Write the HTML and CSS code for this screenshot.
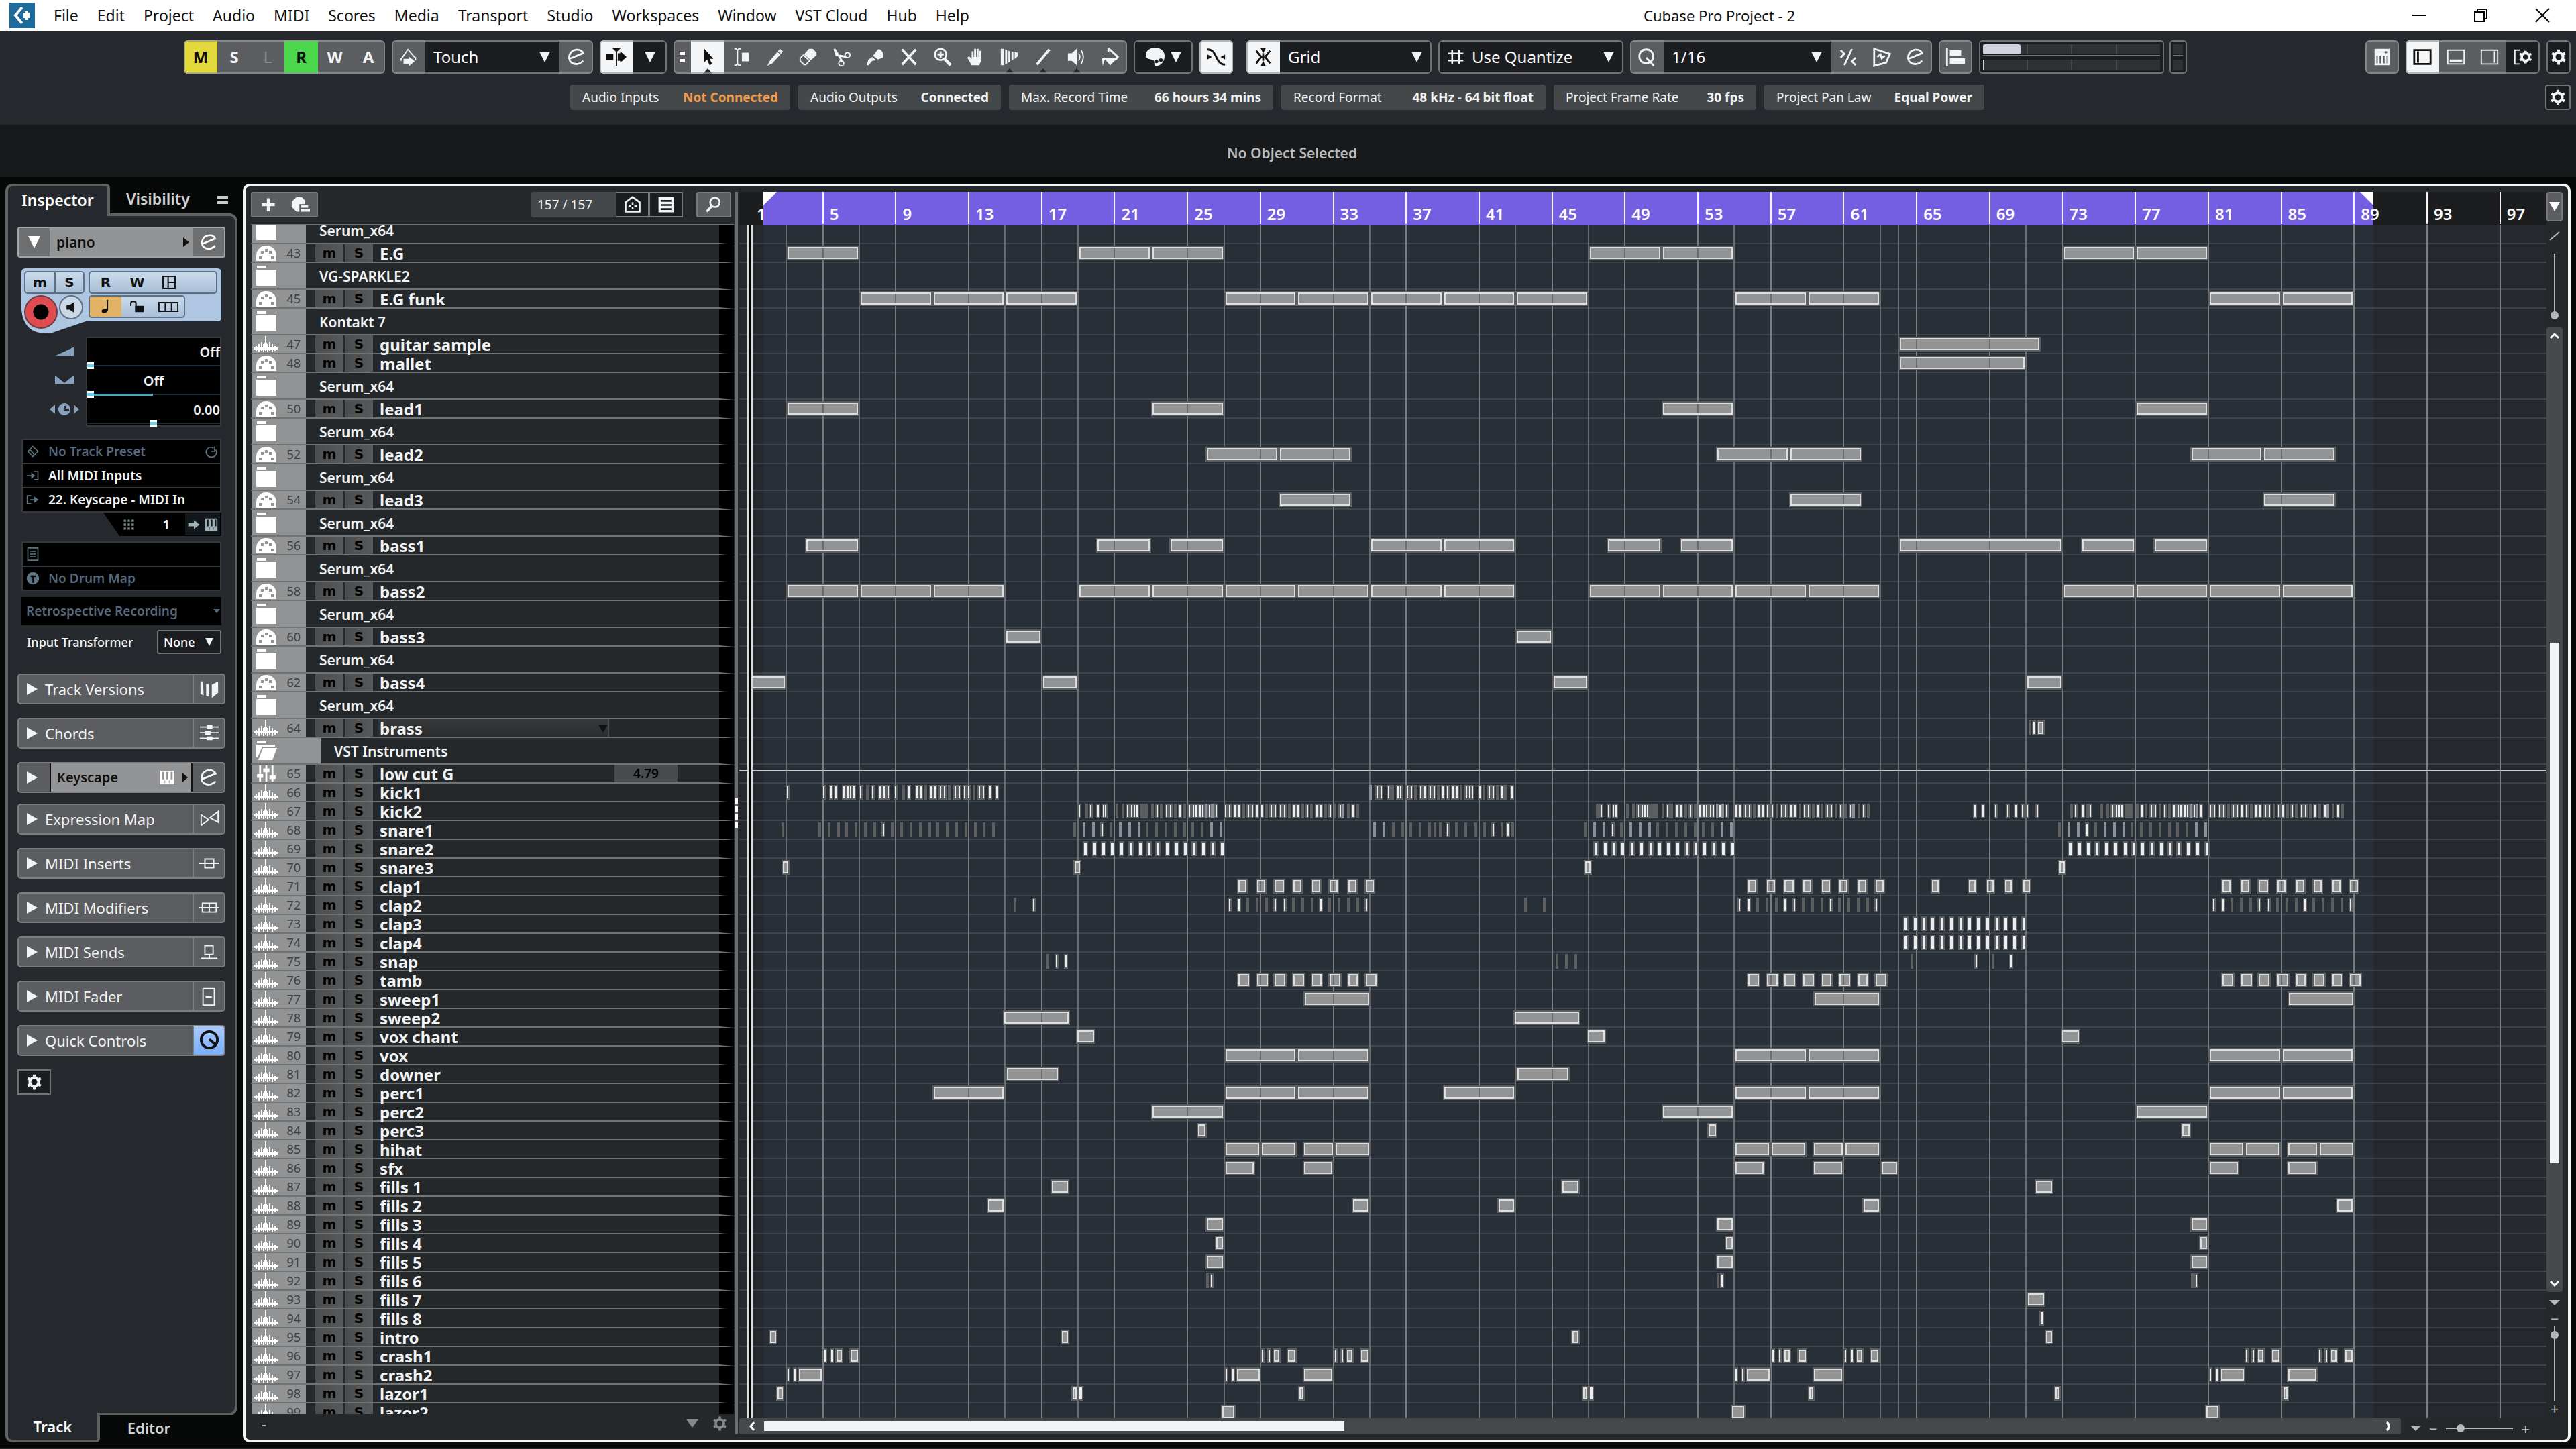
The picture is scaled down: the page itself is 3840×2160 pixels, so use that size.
FILE: index.html
```html
<!DOCTYPE html>
<html lang="en">
<head>
<meta charset="utf-8">
<title>Cubase Pro Project - 2</title>
<link rel="stylesheet" href="styles.css">
</head>
<body>
<svg class="defs" aria-hidden="true">
  <symbol id="i-arrow" viewBox="0 0 32 32"><path d="M10 2v23l5-5 4 9 4-2-4-8h6z"/></symbol>
  <symbol id="i-range" viewBox="0 0 32 32"><path d="M5 3h3l2 2 2-2h3M10 4v24M5 29h3l2-2 2 2h3" fill="none" stroke="currentColor" stroke-width="2"/><path d="M17 9h11v14H17z"/></symbol>
  <symbol id="i-pencil" viewBox="0 0 32 32"><path d="M24 3l5 4-3 4-5-4zM20 8l5 4-13 14-8 4 4-8z"/></symbol>
  <symbol id="i-eraser" viewBox="0 0 32 32"><path d="M17 3h6l6 6v4l-9 8-11-9z"/><path d="M8 13l10 9-6 6H9l-6-6v-4z" fill="none" stroke="currentColor" stroke-width="2"/></symbol>
  <symbol id="i-cut" viewBox="0 0 32 32"><path d="M4 3l9 14 4 7M4 3l3 10 16 3" fill="none" stroke="currentColor" stroke-width="3"/><circle cx="25" cy="13" r="4" fill="none" stroke="currentColor" stroke-width="2"/><circle cx="15" cy="26" r="4" fill="none" stroke="currentColor" stroke-width="2"/></symbol>
  <symbol id="i-glue" viewBox="0 0 32 32"><path d="M20 4c5-2 10 6 8 13l-8 3-8-6zM11 16l6 5-6 1-6 7H2l3-9z"/></symbol>
  <symbol id="i-x" viewBox="0 0 32 32"><path d="M5 4l22 24M27 4L5 28" fill="none" stroke="currentColor" stroke-width="4"/></symbol>
  <symbol id="i-zoom" viewBox="0 0 32 32"><circle cx="13" cy="12" r="9" fill="none" stroke="currentColor" stroke-width="3"/><path d="M19 19l10 10" stroke="currentColor" stroke-width="5"/><path d="M8 12h10M13 7v10" stroke="currentColor" stroke-width="3"/></symbol>
  <symbol id="i-hand" viewBox="0 0 32 32"><path d="M9 29l-7-12 3-2 4 4V7h3v9h1V3h3v13h1V3h3v13h1V6h3v16l-3 7z"/></symbol>
  <symbol id="i-comp" viewBox="0 0 32 32"><path d="M2 3h5v26H2zM9 4l3 1v21l-3 2zM14 6l3 1v16l-3 2zM19 7l3 1v12l-3 2zM24 8l5 1v6l-5 4z"/></symbol>
  <symbol id="i-line" viewBox="0 0 32 32"><path d="M6 28L26 4" stroke="currentColor" stroke-width="4"/></symbol>
  <symbol id="i-speaker" viewBox="0 0 32 32"><path d="M2 10h6l8-7v26l-8-7H2z"/><path d="M19 10q4 6 0 12M23 5q7 11 0 22" fill="none" stroke="currentColor" stroke-width="2"/></symbol>
  <symbol id="i-bucket" viewBox="0 0 32 32"><path d="M5 17h23L16 29zM3 18h5l-4 12z"/><path d="M13 2l15 14-4 5M13 2v6" fill="none" stroke="currentColor" stroke-width="3"/></symbol>
  <symbol id="i-palette" viewBox="0 0 32 32"><path fill-rule="evenodd" d="M16 1c9 0 15 6 15 13 0 9-6 16-13 16-6 0-1-7-5-9S1 20 1 13C1 6 8 1 16 1zm9 17a3 3 0 1 0 .1 0zm-7 2a3 3 0 1 0 .1 0z"/></symbol>
  <symbol id="i-auto" viewBox="0 0 32 32"><path d="M4 20L15 4l12 14M4 18v4M27 16v5" fill="none" stroke="currentColor" stroke-width="2"/><path d="M8 19h8v-4l10 8-10 8v-4H8z"/></symbol>
  <symbol id="i-e" viewBox="0 0 32 32"><path d="M5 19l22-9C23 1 8 3 5 14c-3 12 12 18 22 8" fill="none" stroke="currentColor" stroke-width="3"/></symbol>
  <symbol id="i-scroll" viewBox="0 0 32 32"><path d="M0 11h11v10H0zM18 10h4V7l10 9-10 9v-3h-4z"/><path d="M16 2v28M11 2h10l-5 5z" stroke="currentColor" stroke-width="2"/></symbol>
  <symbol id="i-zero" viewBox="0 0 32 32"><path d="M2 4c9 0 11 6 14 12s6 12 14 12" fill="none" stroke="currentColor" stroke-width="3"/><path d="M2 12v8l7-4zM30 12v8l-7-4z"/></symbol>
  <symbol id="i-snap" viewBox="0 0 32 32"><path d="M12 2h8l-4 8zM12 30h8l-4-8z"/><path d="M16 10v12M5 6l8 10-8 10M27 6l-8 10 8 10" fill="none" stroke="currentColor" stroke-width="3"/></symbol>
  <symbol id="i-hash" viewBox="0 0 32 32"><path d="M10 4v24M22 4v24M3 10h26M3 22h26" stroke="currentColor" stroke-width="3"/></symbol>
  <symbol id="i-q" viewBox="0 0 32 32"><path d="M15 4c7 0 11 5 11 11s-4 11-11 11S4 21 4 15 8 4 15 4zM15 17l12 13" fill="none" stroke="currentColor" stroke-width="3"/></symbol>
  <symbol id="i-soft" viewBox="0 0 32 32"><path d="M22 3L10 29M4 5l6 6-6 6M28 17l-6 6 6 6" fill="none" stroke="currentColor" stroke-width="3"/></symbol>
  <symbol id="i-iq" viewBox="0 0 32 32"><path d="M4 3l25 8-6 14L4 30zM9 16l5-4 2 6 5-4" fill="none" stroke="currentColor" stroke-width="3"/></symbol>
  <symbol id="i-align" viewBox="0 0 32 32"><path d="M1 1h3v30H1zM7 5h18v9H7zM7 18h24v9H7z"/></symbol>
  <symbol id="i-keys" viewBox="0 0 32 32"><path fill-rule="evenodd" d="M4 3h24v26H4zM7 14v12h2V14zM12 14v12h2V14zM18 14v12h2V14zM23 14v12h2V14zM20 7v3h5V7z"/></symbol>
  <symbol id="i-zleft" viewBox="0 0 32 32"><path d="M3 5h26v22H3zM9 7v18" fill="none" stroke="currentColor" stroke-width="3"/></symbol>
  <symbol id="i-zlow" viewBox="0 0 32 32"><path d="M3 5h26v22H3z" fill="none" stroke="currentColor" stroke-width="2"/><path d="M6 20h20v4H6z"/></symbol>
  <symbol id="i-zright" viewBox="0 0 32 32"><path d="M3 5h26v22H3zM24 7v18" fill="none" stroke="currentColor" stroke-width="2"/></symbol>
  <symbol id="i-zset" viewBox="0 0 32 32"><path d="M11 5H3v22h8" fill="none" stroke="currentColor" stroke-width="2"/><circle cx="20" cy="16" r="6" fill="none" stroke="currentColor" stroke-width="4"/><path d="M20 6v4M20 22v4M11 11l4 2M29 11l-4 2M11 21l4-2M29 21l-4-2" stroke="currentColor" stroke-width="4"/></symbol>
  <symbol id="i-gear" viewBox="0 0 32 32"><circle cx="16" cy="16" r="8" fill="none" stroke="currentColor" stroke-width="5"/><path d="M16 2v6M16 24v6M4 9l5 3M28 9l-5 3M4 23l5-3M28 23l-5-3" stroke="currentColor" stroke-width="5"/></symbol>
  <symbol id="i-plus" viewBox="0 0 32 32"><path d="M16 5v22M5 16h22" stroke="currentColor" stroke-width="5"/></symbol>
  <symbol id="i-preset" viewBox="0 0 32 32"><path d="M9 3h9l6 6v6H14v13H9l-8-8V11z"/><path d="M17 17h12v4H17zM17 24h15v4H17z"/></symbol>
  <symbol id="i-house" viewBox="0 0 32 32"><path d="M4 12L16 3l12 9v16H4z" fill="none" stroke="currentColor" stroke-width="3"/><path d="M16 12v4M16 20v4M9 18h4M19 18h4" stroke="currentColor" stroke-width="3"/></symbol>
  <symbol id="i-list" viewBox="0 0 32 32"><path fill-rule="evenodd" d="M3 3h26v26H3zM7 8v3h18V8zM7 15v3h18v-3zM7 22v3h18v-3z"/></symbol>
  <symbol id="i-search" viewBox="0 0 32 32"><circle cx="18" cy="12" r="8" fill="none" stroke="currentColor" stroke-width="3"/><path d="M13 18L4 28" stroke="currentColor" stroke-width="4"/></symbol>
  <symbol id="i-midi" viewBox="0 0 32 24"><path fill-rule="evenodd" d="M1 24V16C1 7 8 1 16 1s15 6 15 15v8zM5 17h4v4H5zM8 9h4v4H8zM14 6h4v4h-4zM20 9h4v4h-4zM23 17h4v4h-4z"/></symbol>
  <symbol id="i-folder" viewBox="0 0 32 32"><path d="M2 1h13v4H2zM1 7h30v24H1z"/></symbol>
  <symbol id="i-open" viewBox="0 0 32 32"><path d="M2 1h13v4H2zM1 7h28v3H10L3 26H1z"/><path d="M11 12h21l-7 18H4z"/></symbol>
  <symbol id="i-audio" viewBox="0 0 36 24"><path d="M0 17h36v3H0zM16 10h4v10h-4z"/><path d="M4 15v7M8 12v12M12 9v13M15 12v12M18 0v22M21 12v12M24 9v13M28 12v12M32 15v7" stroke="currentColor" stroke-width="2"/></symbol>
  <symbol id="i-fader" viewBox="0 0 32 26"><path d="M6 0v26M16 0v26M26 0v26" stroke="currentColor" stroke-width="3"/><path d="M1 14h10v6H1zM11 5h10v6H11zM21 16h10v6H21z"/></symbol>
  <symbol id="i-lanes" viewBox="0 0 32 32"><path d="M3 3h26v26H3zM14 3v26M14 16h15" fill="none" stroke="currentColor" stroke-width="3"/></symbol>
  <symbol id="i-note" viewBox="0 0 32 32"><path d="M19 1h3v22c0 8-14 9-14 3 0-4 6-6 11-5z"/></symbol>
  <symbol id="i-lock" viewBox="0 0 32 32"><path d="M12 14h19v14H12z"/><path d="M3 14V9c0-6 11-6 11 0v6" fill="none" stroke="currentColor" stroke-width="3"/></symbol>
  <symbol id="i-cells" viewBox="0 0 32 16"><path d="M1 1h30v14H1zM11 2v12M21 2v12" fill="none" stroke="currentColor" stroke-width="2"/></symbol>
  <symbol id="i-piano" viewBox="0 0 24 24"><path fill-rule="evenodd" d="M1 1h22v22H1zM4 3v12h3V3zM11 3v12h3V3zM18 3v12h3V3zM8 17v4h1v-4zM15 17v4h1v-4z"/></symbol>
  <symbol id="i-vol" viewBox="0 0 32 16"><path d="M1 15L31 1v14z"/></symbol>
  <symbol id="i-pan" viewBox="0 0 32 16"><path d="M1 1l15 12L31 1v14H1z"/></symbol>
  <symbol id="i-clock" viewBox="0 0 44 20"><path d="M8 3v14L0 10zM36 3v14l8-7z"/><path fill-rule="evenodd" d="M22 1a9 9 0 1 1-.1 0zm-1 4v7h8v-3h-5V5z"/></symbol>
  <symbol id="i-diamond" viewBox="0 0 24 24"><path d="M12 3l9 9-9 9-9-9zM6 8l8 9" fill="none" stroke="currentColor" stroke-width="2"/></symbol>
  <symbol id="i-in" viewBox="0 0 24 24"><path d="M1 12h12M14 5h7v14h-7" fill="none" stroke="currentColor" stroke-width="2"/><path d="M9 6v12l7-6z"/></symbol>
  <symbol id="i-out" viewBox="0 0 24 24"><path d="M9 5H2v14h7M7 12h10" fill="none" stroke="currentColor" stroke-width="2"/><path d="M14 6v12l8-6z"/></symbol>
  <symbol id="i-reload" viewBox="0 0 24 24"><path d="M20 9c4 8-2 13-8 13S0 15 4 9s8-5 12-3M12 12h6V3" fill="none" stroke="currentColor" stroke-width="2"/></symbol>
  <symbol id="i-dots" viewBox="0 0 24 24"><path d="M3 3h4v4H3zM10 3h4v4h-4zM17 3h4v4h-4zM3 10h4v4H3zM10 10h4v4h-4zM17 10h4v4h-4zM3 17h4v4H3zM10 17h4v4h-4zM17 17h4v4h-4z"/></symbol>
  <symbol id="i-sheet" viewBox="0 0 24 24"><path d="M3 1h18v22H3zM7 7h10M7 12h10M7 17h10" fill="none" stroke="currentColor" stroke-width="2"/></symbol>
  <symbol id="i-drum" viewBox="0 0 24 24"><path fill-rule="evenodd" d="M12 1a11 11 0 1 1-.1 0zM8 7v3h3v10h3V10h3V7z"/></symbol>
  <symbol id="i-right" viewBox="0 0 24 24"><path d="M2 9h10V4l10 8-10 8v-5H2z"/></symbol>
  <symbol id="i-versions" viewBox="0 0 32 32"><path d="M2 4h4l1 22-5-2zM11 8h4v20l-4-1zM20 9l10-5v18l-10 8z"/></symbol>
  <symbol id="i-chords" viewBox="0 0 32 32"><path d="M1 6h30M1 15h30M1 24h30" stroke="currentColor" stroke-width="2"/><path d="M12 3h9v6h-9zM9 12h9v6H9zM12 21h9v6h-9z"/></symbol>
  <symbol id="i-expr" viewBox="0 0 32 32"><path d="M3 9v17l12-9zM30 4v17L17 14z" fill="none" stroke="currentColor" stroke-width="2"/></symbol>
  <symbol id="i-insert" viewBox="0 0 32 32"><path d="M0 16h32M9 9h14v14H9z" fill="none" stroke="currentColor" stroke-width="2"/></symbol>
  <symbol id="i-modif" viewBox="0 0 32 32"><path d="M0 16h32M5 9h22v14H5zM16 9v14" fill="none" stroke="currentColor" stroke-width="2"/></symbol>
  <symbol id="i-send" viewBox="0 0 32 32"><path d="M3 26h26M16 26v-6M9 6h13v14H9z" fill="none" stroke="currentColor" stroke-width="2"/></symbol>
  <symbol id="i-mfader" viewBox="0 0 32 32"><path d="M6 4h18v26H6zM10 17h10" fill="none" stroke="currentColor" stroke-width="2"/></symbol>
  <symbol id="i-knob" viewBox="0 0 32 32"><circle cx="16" cy="15" r="13" fill="none" stroke="currentColor" stroke-width="4"/><path d="M16 14l9 8" stroke="currentColor" stroke-width="4"/></symbol>
</svg>

<header class="menubar">
  <svg class="logo" viewBox="0 0 38 38"><path fill="#1e6a9a" d="M0 0h38v38H0z"/><path d="M19 7L9 19l10 12" fill="none" stroke="#fff" stroke-width="4"/><path fill="#fff" d="M21 15h3v-3h4v3h2v8h-2v3h-4v-3h-3z"/></svg>
  <nav class="menus">
    <a href="#">File</a><a href="#">Edit</a><a href="#">Project</a><a href="#">Audio</a><a href="#">MIDI</a><a href="#">Scores</a><a href="#">Media</a><a href="#">Transport</a><a href="#">Studio</a><a href="#">Workspaces</a><a href="#">Window</a><a href="#">VST Cloud</a><a href="#">Hub</a><a href="#">Help</a>
  </nav>
  <h1 class="title">Cubase Pro Project - 2</h1>
  <div class="winbtns">
    <button aria-label="Minimize"><svg viewBox="0 0 24 24"><path d="M2 12h20" stroke="#000" stroke-width="2"/></svg></button>
    <button aria-label="Restore"><svg viewBox="0 0 24 24"><path d="M3 7h14v14H3zM7 7V3h14v14h-4" fill="none" stroke="#000" stroke-width="2"/></svg></button>
    <button aria-label="Close"><svg viewBox="0 0 24 24"><path d="M2 2l20 20M22 2L2 22" stroke="#000" stroke-width="2"/></svg></button>
  </div>
</header>

<section class="toolbar">
  <div class="tools">
    <div class="group letters">
      <button class="yellow">M</button><button>S</button><button class="off">L</button><button class="green">R</button><button>W</button><button>A</button>
    </div>
    <div class="group">
      <button aria-label="Automation"><svg><use href="#i-auto"/></svg></button>
      <label class="pick grow-200"><select aria-label="Automation mode"><option>Touch</option></select></label>
      <button aria-label="Open automation panel"><svg><use href="#i-e"/></svg></button>
    </div>
    <div class="group">
      <button class="on" aria-label="Auto-scroll"><svg><use href="#i-scroll"/></svg></button>
      <button class="dark" aria-label="Auto-scroll options"><i class="tri"></i></button>
    </div>
    <div class="group">
      <span class="grip"></span>
      <button class="on more" aria-label="Select"><svg><use href="#i-arrow"/></svg></button>
      <button aria-label="Range"><svg><use href="#i-range"/></svg></button>
      <button aria-label="Draw"><svg><use href="#i-pencil"/></svg></button>
      <button aria-label="Erase"><svg><use href="#i-eraser"/></svg></button>
      <button aria-label="Split"><svg><use href="#i-cut"/></svg></button>
      <button aria-label="Glue"><svg><use href="#i-glue"/></svg></button>
      <button aria-label="Mute"><svg><use href="#i-x"/></svg></button>
      <button aria-label="Zoom"><svg><use href="#i-zoom"/></svg></button>
      <button aria-label="Hand"><svg><use href="#i-hand"/></svg></button>
      <button class="more" aria-label="Comp"><svg><use href="#i-comp"/></svg></button>
      <button class="more" aria-label="Line"><svg><use href="#i-line"/></svg></button>
      <button class="more" aria-label="Play"><svg><use href="#i-speaker"/></svg></button>
      <button aria-label="Color"><svg><use href="#i-bucket"/></svg></button>
    </div>
    <div class="group"><button class="dark wide" aria-label="Color menu"><svg><use href="#i-palette"/></svg><i class="tri"></i></button></div>
    <div class="group spaced"><button class="on" aria-label="Snap to zero crossing"><svg><use href="#i-zero"/></svg></button></div>
    <div class="group">
      <button class="on" aria-label="Snap"><svg><use href="#i-snap"/></svg></button>
      <label class="pick grow-226"><select aria-label="Snap type"><option>Grid</option></select></label>
    </div>
    <div class="group"><label class="pick grow-276"><svg><use href="#i-hash"/></svg><select aria-label="Grid type"><option>Use Quantize</option></select></label></div>
    <div class="group">
      <button aria-label="Apply quantize"><svg><use href="#i-q"/></svg></button>
      <label class="pick grow-250"><select aria-label="Quantize preset"><option>1/16</option></select></label>
      <button aria-label="Soft quantize"><svg><use href="#i-soft"/></svg></button>
      <button aria-label="Iterative quantize"><svg><use href="#i-iq"/></svg></button>
      <button aria-label="Open quantize panel"><svg><use href="#i-e"/></svg></button>
    </div>
    <div class="group"><button aria-label="Align"><svg><use href="#i-align"/></svg></button></div>
    <div class="meters">
      <div class="meter"><span class="level"></span><i></i><i></i><i></i></div>
      <div class="meter"><span class="peak"></span><i></i><i></i><i></i></div>
    </div>
    <div class="meters tiny"><div class="meter"></div><div class="meter"></div></div>
    <div class="push group"><button aria-label="Keyboard"><svg><use href="#i-keys"/></svg></button></div>
    <div class="group">
      <button class="on" aria-label="Left zone"><svg><use href="#i-zleft"/></svg></button>
      <button aria-label="Lower zone"><svg><use href="#i-zlow"/></svg></button>
      <button aria-label="Right zone"><svg><use href="#i-zright"/></svg></button>
      <button class="dark" aria-label="Window layout"><svg><use href="#i-zset"/></svg></button>
    </div>
    <div class="group"><button class="dark narrow" aria-label="Set up toolbar"><svg><use href="#i-gear"/></svg></button></div>
  </div>
  <div class="status">
    <dl class="chips">
      <div class="chip w1"><dt>Audio Inputs</dt><dd class="warn">Not Connected</dd></div>
      <div class="chip w2"><dt>Audio Outputs</dt><dd>Connected</dd></div>
      <div class="chip w3"><dt>Max. Record Time</dt><dd>66 hours 34 mins</dd></div>
      <div class="chip w3"><dt>Record Format</dt><dd>48 kHz - 64 bit float</dd></div>
      <div class="chip w2"><dt>Project Frame Rate</dt><dd>30 fps</dd></div>
      <div class="chip w1"><dt>Project Pan Law</dt><dd>Equal Power</dd></div>
    </dl>
    <button class="cog" aria-label="Set up status line"><svg><use href="#i-gear"/></svg></button>
  </div>
</section>

<div class="infoline">No Object Selected</div>

<main class="workspace">
  <aside class="inspector">
    <div class="tabs top"><button class="active">Inspector</button><button>Visibility</button><span class="burger"></span></div>
    <div class="pane">
      <div class="trackname"><button aria-label="Collapse"><i class="tri"></i></button><span class="nm">piano</span><i class="play"></i><button aria-label="Edit"><svg><use href="#i-e"/></svg></button></div>

      <div class="trackctl">
        <svg class="bulge" viewBox="0 0 298 98" aria-hidden="true"><path fill="#afc6e2" d="M6 0h286q6 0 6 6v67q0 6-6 6H96L46 96Q4 102 0 62V6q0-6 6-6z"/></svg>
        <div class="ctl-left">
          <div class="pair"><button>m</button><button>S</button></div>
          <div class="rec"><button class="record" aria-label="Record enable"></button><button class="mon" aria-label="Monitor"><svg viewBox="0 0 16 16"><path d="M2 5h4l6-4v14l-6-4H2z"/></svg></button></div>
        </div>
        <div class="ctl-right">
          <div class="pair rw"><button>R</button><button>W</button><button aria-label="Lanes"><svg><use href="#i-lanes"/></svg></button></div>
          <div class="pair nl"><button class="orange" aria-label="Timebase"><svg><use href="#i-note"/></svg></button><button aria-label="Lock"><svg><use href="#i-lock"/></svg></button><button aria-label="Lane display"><svg><use href="#i-cells"/></svg></button></div>
        </div>
      </div>

      <div class="params">
        <div class="picons"><svg><use href="#i-vol"/></svg><svg><use href="#i-pan"/></svg><svg class="wide"><use href="#i-clock"/></svg></div>
        <div class="pvals">
          <label class="right">Off<input type="range" min="0" max="100" value="0"></label>
          <label class="mid">Off<input class="fill" type="range" min="0" max="100" value="0"></label>
          <label class="right">0.00<input type="range" min="0" max="100" value="50"></label>
        </div>
      </div>

      <div class="box routing">
        <div class="line dim"><svg><use href="#i-diamond"/></svg><span>No Track Preset</span><svg><use href="#i-reload"/></svg></div>
        <div class="line"><svg><use href="#i-in"/></svg><span>All MIDI Inputs</span></div>
        <div class="line"><svg><use href="#i-out"/></svg><span>22. Keyscape - MIDI In</span></div>
      </div>
      <div class="channel"><svg><use href="#i-dots"/></svg><span>1</span><button aria-label="Open instrument"><svg><use href="#i-right"/></svg><svg><use href="#i-piano"/></svg></button></div>
      <div class="box drum">
        <div class="line dim"><svg><use href="#i-sheet"/></svg></div>
        <div class="line dim"><svg><use href="#i-drum"/></svg><span>No Drum Map</span></div>
      </div>
      <button class="retro">Retrospective Recording<i class="tri"></i></button>
      <div class="transformer"><label for="xf">Input Transformer</label><span class="pick"><select id="xf"><option>None</option></select></span></div>

      <div class="sections">
        <div class="sec"><button><i class="play"></i>Track Versions</button><span><svg><use href="#i-versions"/></svg></span></div>
        <div class="sec"><button><i class="play"></i>Chords</button><span><svg><use href="#i-chords"/></svg></span></div>
        <div class="sec inst"><button aria-label="Expand"><i class="play"></i></button><b>Keyscape<svg><use href="#i-piano"/></svg><i class="play"></i></b><span><svg><use href="#i-e"/></svg></span></div>
        <div class="sec"><button><i class="play"></i>Expression Map</button><span><svg><use href="#i-expr"/></svg></span></div>
        <div class="sec"><button><i class="play"></i>MIDI Inserts</button><span><svg><use href="#i-insert"/></svg></span></div>
        <div class="sec"><button><i class="play"></i>MIDI Modifiers</button><span><svg><use href="#i-modif"/></svg></span></div>
        <div class="sec"><button><i class="play"></i>MIDI Sends</button><span><svg><use href="#i-send"/></svg></span></div>
        <div class="sec"><button><i class="play"></i>MIDI Fader</button><span><svg><use href="#i-mfader"/></svg></span></div>
        <div class="sec"><button><i class="play"></i>Quick Controls</button><span class="blue"><svg><use href="#i-knob"/></svg></span></div>
        <button class="setup" aria-label="Set up inspector"><svg><use href="#i-gear"/></svg></button>
      </div>
    </div>
    <div class="tabs bottom"><button class="active">Track</button><button>Editor</button></div>
  </aside>

  <section class="project">
    <div class="tracklist">
      <div class="tl-head">
        <div class="mini"><button aria-label="Add track"><svg><use href="#i-plus"/></svg></button><button aria-label="Use track preset"><svg><use href="#i-preset"/></svg></button></div>
        <div class="count"><span>157 / 157</span><button aria-label="Divide"><svg><use href="#i-house"/></svg></button><button aria-label="Agents"><svg><use href="#i-list"/></svg></button></div>
        <div class="mini find"><button aria-label="Find tracks"><svg><use href="#i-search"/></svg></button></div>
      </div>
      <div class="tl-view"><ol class="tracks" id="tracks"></ol></div>
      <div class="tl-foot"><span>-</span><i class="tri"></i><svg><use href="#i-gear"/></svg></div>
    </div>
    <div class="splitter"><i></i><i></i><i></i><i></i></div>
    <div class="timeline">
      <div class="ruler" id="ruler"></div>
      <div class="lanes"><div class="grid" id="grid"></div><div class="stack" id="lanes"></div><div class="rule-line"></div><div class="cursor"></div></div>
      <div class="hbar">
        <div class="hscroll"><button aria-label="Scroll left"><svg viewBox="0 0 12 16"><path d="M9 2L4 8l5 6"/></svg></button><div class="rail"><div class="thumb"></div></div><button aria-label="Scroll right"><svg viewBox="0 0 12 16"><path d="M3 2q7 6 0 12"/></svg></button></div>
        <div class="hzoom"><i class="tri"></i><b>−</b><input type="range" min="0" max="100" value="18" aria-label="Horizontal zoom"><b>+</b></div>
      </div>
    </div>
    <div class="side">
      <button class="menu" aria-label="Ruler options"><i class="tri"></i></button>
      <svg class="slash" viewBox="0 0 24 24"><path d="M5 18L19 6" stroke="#b5b7b8" stroke-width="2"/></svg>
      <input class="v wave" type="range" min="0" max="100" value="100" aria-label="Waveform zoom">
      <div class="vscroll"><button aria-label="Scroll up"><svg viewBox="0 0 16 12"><path d="M2 9l6-6 6 6"/></svg></button><div class="rail"><div class="thumb"></div></div><button aria-label="Scroll down"><svg viewBox="0 0 16 12"><path d="M2 3l6 6 6-6"/></svg></button></div>
      <i class="tri"></i><b>−</b>
      <input class="v tall" type="range" min="0" max="100" value="8" aria-label="Vertical zoom">
      <b>+</b>
    </div>
  </section>
</main>
<footer class="edge"></footer>
<script src="app.js"></script>
</body>
</html>
```
FILE: app.js
```js
// One bar is 27.174 ticks; the view starts 15 ticks before bar 1 and spans 2694.
const BAR = 2500 / 92, LEAD = 15, SPAN = 2694;
const pct = t => (t / SPAN * 100) + '%';
const pos = t => pct(t + LEAD);
const barAt = b => (b - 1) * BAR;

// '3-7 19-23' -> clips measured in bars
const bars = s => s.split(' ').map(p => {
  const [a, b] = p.split('-').map(Number);
  return [barAt(a), (b - a) * BAR];
});
// the same [offset, width] list repeated from each start bar
const at = (starts, list) => starts.flatMap(b => list.map(([o, w, k]) => [barAt(b) + o, w, k]));
// '2 t13 l9' : hit, thin slice, light slice
const hits = (s, w = 6) => s.split(' ').map(p =>
  p[0] === 't' ? [+p.slice(1) - 2, 4] :
  p[0] === 'l' ? [+p.slice(1) - 2, 4, 'light'] : [+p - w / 2, w]);

const A = [19, 47, 73], B = [27, 55, 81];
const kickB = hits('t13 19 30 38 41 t58 t67 74 80 84 88 t94 t98 t102 t111 118 t124 132 138 t145 152 t159 166 172 176 182 186 l192 196 l200 206 220 226 234 240 t247 254 260 267 274 t281 288 294 302 308 t315 322 328 t335 342 t348 356 362 t369 376 t383 391 l395 t403 410 t417');
const snareB = hits('t-5 l9 l23 36 t49 l63 l77 l91 t103 t117 t131 t145 t159 t171 t185 l199 l213');
const snare2 = hits('11 25 38 51 65 79 93 106 119 133 147 160 173 187 201 215', 8);
const clapS = hits('8 22 t35 t49 t63 76 90 t103 t117 t131 144 t157 t171 t185 t199 212');
const half = hits('11 25 38 51 65 79 93 106 119 133 147 160 173 187', 8);
const crash = [[0, 6], [10, 6], [18, 12], [39, 15]];

const tracks = [
  ['folder', '', 'Serum_x64'],
  ['midi', 43, 'E.G', bars('3-7 19-23 23-27 47-51 51-55 73-77 77-81')],
  ['folder', '', 'VG-SPARKLE2'],
  ['midi', 45, 'E.G funk', bars('7-11 11-15 15-19 27-31 31-35 35-39 39-43 43-47 55-59 59-63 81-85 85-89')],
  ['folder', '', 'Kontakt 7'],
  ['audio', 47, 'guitar sample', bars('64-71.8')],
  ['midi', 48, 'mallet', bars('64-71')],
  ['folder', '', 'Serum_x64'],
  ['midi', 50, 'lead1', bars('3-7 23-27 51-55 77-81')],
  ['folder', '', 'Serum_x64'],
  ['midi', 52, 'lead2', bars('26-30 30-34 54-58 58-62 80-84 84-88')],
  ['folder', '', 'Serum_x64'],
  ['midi', 54, 'lead3', bars('30-34 58-62 84-88')],
  ['folder', '', 'Serum_x64'],
  ['midi', 56, 'bass1', bars('4-7 20-23 24-27 35-39 39-43 48-51 52-55 64-73 74-77 78-81')],
  ['folder', '', 'Serum_x64'],
  ['midi', 58, 'bass2', bars('3-7 7-11 11-15 19-23 23-27 27-31 31-35 35-39 39-43 47-51 51-55 55-59 59-63 73-77 77-81 81-85 85-89')],
  ['folder', '', 'Serum_x64'],
  ['midi', 60, 'bass3', bars('15-17 43-45')],
  ['folder', '', 'Serum_x64'],
  ['midi', 62, 'bass4', bars('1-3 17-19 45-47 71-73')],
  ['folder', '', 'Serum_x64'],
  ['audio', 64, 'brass', at([71], [[4, 4], [9, 6], [16, 12]]), 'edit'],
  ['open', '', 'VST Instruments'],
  ['fader', 65, 'low cut G', [], 'gain'],
  ['audio', 66, 'kick1', [
    ...at([3], hits('2')),
    ...at([5], hits('1 12 19 31 37 41 46 56 t66 74 85 91 97 108 t120 128 140 146 t153 161 167 175 181 t188 197 203 211 217 t225 233 239 249 259')),
    ...at([35], hits('l1 11 17 28 t34 42 46 56 62 t68 76 82 90 96 t102 109 116 124 130 t136 144 149 153 164 t170 178 184 t190 197 t202 212'))]],
  ['audio', 67, 'kick2', [...at([19], hits('2')), ...at(A, kickB), ...at([68], hits('5 17 36 54 66 76 83 98'))]],
  ['audio', 68, 'snare1', [
    ...at([3], hits('t-5')),
    ...at([5], hits('t-5 t9 t23 t35 t49 t63 t77 90 t103 t117 t131 t145 t159 t171 t185 t199 t213 t227 t240 t254')),
    ...at(A, snareB),
    ...at([35], hits('l7 l21 t35 t49 t61 t75 t89 t97 t105 116 t129 t143 t157 t171 184 t197 206 t213'))]],
  ['audio', 69, 'snare2', at(A, snare2)],
  ['audio', 70, 'snare3', at([3, ...A], [[-7, 12]])],
  ['audio', 71, 'clap1', [
    ...at(B, [[19, 16], [47, 16], [73, 18], [101, 16], [129, 16], [155, 16], [183, 16], [209, 16]]),
    ...at([66, 68, 69, 70, 71], [[-6, 14]])]],
  ['audio', 72, 'clap2', [...at([15], hits('t15 43')), ...at([43], hits('t15 t43')), ...at(B, clapS)]],
  ['audio', 73, 'clap3', at([64], half)],
  ['audio', 74, 'clap4', at([64], half)],
  ['audio', 75, 'snap', [...at([17], hits('t9 22 36')), ...at([45], hits('t7 t21 t35')), ...at([64], hits('t20 116 t141 168'))]],
  ['audio', 76, 'tamb', at(B, [[19, 20], [47, 20], [73, 20], [101, 20], [129, 18], [155, 20], [183, 18], [209, 20]])],
  ['audio', 77, 'sweep1', at(B, [[118, 100]])],
  ['audio', 78, 'sweep2', at([15, 43], [[-3, 100]])],
  ['audio', 79, 'vox chant', at(A, [[-3, 29]])],
  ['audio', 80, 'vox', bars('27-31 31-35 55-59 59-63 81-85 85-89')],
  ['audio', 81, 'downer', at([15, 43], [[1, 80]])],
  ['audio', 82, 'perc1', bars('11-15 27-31 31-35 39-43 55-59 59-63 81-85 85-89')],
  ['audio', 83, 'perc2', bars('23-27 51-55 77-81')],
  ['audio', 84, 'perc3', at([23, 51, 77], [[68, 15]])],
  ['audio', 85, 'hihat', at(B, [[0, 54], [54, 54], [117, 47], [164, 54]])],
  ['audio', 86, 'sfx', [...at(B, [[0, 46], [117, 46]]), ...bars('63-64')]],
  ['audio', 87, 'fills 1', at([17, 45, 71], [[13, 28]])],
  ['audio', 88, 'fills 2', bars('14-15 34-35 42-43 62-63 88-89')],
  ['audio', 89, 'fills 3', bars('26-27 54-55 80-81')],
  ['audio', 90, 'fills 4', at([27, 55, 81], [[-14, 14]])],
  ['audio', 91, 'fills 5', bars('26-27 54-55 80-81')],
  ['audio', 92, 'fills 6', at([26, 54, 80], [[1, 4], [6, 6]])],
  ['audio', 93, 'fills 7', at([71], [[1, 28]])],
  ['audio', 94, 'fills 8', at([71], [[20, 7]])],
  ['audio', 95, 'intro', at([1, 17, 45, 71], [[28, 13]])],
  ['audio', 96, 'crash1', at([5, 29, 33, 57, 61, 83, 87], crash)],
  ['audio', 97, 'crash2', [
    ...at([3, 27, 55, 81], [[0, 6], [10, 6], [17, 38]]),
    ...at(B, [[117, 46]])]],
  ['audio', 98, 'lazor1', [...at([1], [[39, 12]]), ...at([19, 47], [[-10, 10], [0, 8]]), ...at(B, [[110, 10]]), ...at([73], [[-13, 10]])]],
  ['audio', 99, 'lazor2', at(B, [[-5, 22]])]
];

const el = (tag, cls, text) => {
  const n = document.createElement(tag);
  if (cls) n.className = cls;
  if (text !== undefined) n.textContent = text;
  return n;
};
const put = (parent, cls, t, w, text) => {
  const n = el('i', cls, text);
  n.style.left = pos(t);
  if (w) n.style.width = pct(w);
  parent.append(n);
  return n;
};
const icon = id => `<svg class="ico ${id}"><use href="#i-${id}"/></svg>`;

const list = document.getElementById('tracks');
const lanes = document.getElementById('lanes');
for (const [kind, num, name, clips = [], extra] of tracks) {
  const group = kind === 'folder' || kind === 'open';
  const row = el('li', 'track ' + (group ? 'group-row ' + kind : ''));
  const tag = el('span', 'tag');
  tag.innerHTML = icon(kind);
  if (!group) tag.append(el('span', 'num', num));
  row.append(tag);
  if (!group) row.append(el('button', 'ms', 'm'), el('button', 'ms', 'S'));
  row.append(el('span', 'name' + (extra === 'edit' ? ' editing' : ''), name));
  if (extra === 'gain') row.append(el('span', 'gain', '4.79'));
  list.append(row);

  const lane = el('div', 'lane' + (group ? ' tall' : ''));
  for (const [t, w, k] of clips) {
    const clip = put(lane, w <= 4 ? 'clip thin' : w <= 8 ? 'clip hit' : 'clip', t + 1, w);
    if (k) clip.classList.add(k);
    if (w > 12) {
      for (let b = 5; b < 98; b += 4) {
        const d = barAt(b) - t - 1;
        if (d > 4 && d < w - 4) {
          const m = el('b');
          m.style.left = ((d - 2) / (w - 4) * 100) + '%';
          clip.append(m);
        }
      }
    }
  }
  lanes.append(lane);
}

const ruler = document.getElementById('ruler');
const grid = document.getElementById('grid');
put(ruler, 'range', 21, 2400);
put(grid, 'range', 21, 2400);
put(ruler, 'loc left', 21);
put(ruler, 'loc right', 2421);
for (let b = 1; b < 98; b += 4) {
  if (b > 1) {
    put(ruler, 'tick', barAt(b));
    put(grid, 'tick', barAt(b));
  }
  put(ruler, 'num', barAt(b), 0, b);
}
for (const b of [3, 7, 15, 19, 27, 35, 43, 47, 55, 63, 64, 71]) put(grid, 'mark', barAt(b));
```
FILE: styles.css
```css
* { box-sizing: border-box; margin: 0; padding: 0; }
html, body { height: 100%; }
body {
  display: flex; flex-direction: column; overflow: hidden;
  background: #070808; color: #f2f3f4;
  font-family: "Noto Sans", "Open Sans", sans-serif; font-size: 22px; line-height: 28px;
}
button, select, input { font: inherit; color: inherit; border: 0; background: none; appearance: none; outline: 0; }
a { color: inherit; text-decoration: none; }
i, b { font-style: normal; }
ol { list-style: none; }
svg { fill: currentColor; flex: none; display: block; }
.defs { position: absolute; width: 0; height: 0; }
.tri { width: 18px; height: 14px; background: currentColor; clip-path: polygon(0 0, 100% 0, 50% 100%); flex: none; }
.play { width: 16px; height: 18px; background: currentColor; clip-path: polygon(0 0, 100% 50%, 0 100%); flex: none; }

/* menu bar */
.menubar { position: relative; height: 46px; background: #fff; color: #111; display: flex; align-items: center; padding: 0 38px 0 14px; font-size: 23px; }
.logo { width: 38px; height: 38px; margin-right: 28px; }
.menus { display: flex; gap: 28px; }
.title { position: absolute; left: 2450px; font-size: 22px; font-weight: 400; }
.winbtns { margin-left: auto; display: flex; gap: 68px; }
.winbtns button, .winbtns svg { width: 24px; height: 24px; }

/* toolbar */
.toolbar { background: #25292d; height: 140px; padding: 14px 8px 0 274px; }
.tools { display: flex; gap: 10px; height: 50px; }
.group { display: flex; height: 50px; border-radius: 6px; overflow: hidden; background: #5b5d60; position: relative; }
.group::after { content: ""; position: absolute; inset: 0; border: 2px solid rgba(150, 154, 156, .7); border-radius: 6px; pointer-events: none; }
.group button { width: 50px; height: 50px; display: flex; align-items: center; justify-content: center; gap: 8px; position: relative; }
.group button svg { width: 30px; height: 30px; }
.group .on { background: #f4f5f6; color: #111; }
.group .dark { background: #1b1d20; }
.group .wide { width: 88px; }
.group .narrow { width: 36px; }
.group .narrow svg { width: 26px; height: 26px; }
.group .tri { width: 16px; height: 16px; }
.more::after { content: ""; position: absolute; left: 18px; bottom: 0; width: 14px; height: 8px; background: #25292d; clip-path: polygon(50% 0, 100% 100%, 0 100%); }
.letters button { font-weight: 700; font-size: 24px; }
.group .yellow { background: #e2d73b; color: #111; }
.group .green { background: #4bd64b; color: #111; }
.group .off { color: #8a8c8e; font-weight: 400; }
.grip { width: 26px; display: flex; flex-direction: column; align-items: center; justify-content: center; gap: 6px; }
.grip::before, .grip::after { content: ""; width: 8px; height: 5px; background: #fff; }
.spaced { margin-right: 10px; }
.pick { position: relative; display: flex; align-items: center; background: #1b1d20; }
.pick svg { width: 28px; height: 28px; margin-left: 12px; }
.pick select { flex: 1; height: 100%; padding: 0 12px; font-size: 24px; line-height: 46px; color: #fff; }
.pick svg + select { padding-left: 10px; }
.pick::after { content: ""; position: absolute; right: 14px; width: 16px; height: 16px; background: #f2f3f4; clip-path: polygon(0 0, 100% 0, 50% 100%); pointer-events: none; }
.grow-200 { width: 200px; }
.grow-226 { width: 226px; }
.grow-250 { width: 250px; }
.grow-276 { width: 276px; }
.meters { width: 276px; display: grid; grid-template-rows: 1fr 1fr; border: 2px solid #707374; border-radius: 5px; background: #1b1d20; }
.meters.tiny { width: 26px; margin-left: -2px; }
.meter { display: flex; margin: 4px; background: #2f3134; position: relative; justify-content: space-evenly; }
.meter + .meter { box-shadow: 0 -5px #1b1d20, 0 -7px #707374; }
.meter > i { width: 2px; background: #45474a; }
.level { position: absolute; left: 0; top: 0; bottom: 0; width: 56px; background: #d0d4de; border-radius: 3px; }
.peak { position: absolute; left: 0; top: 0; bottom: 0; width: 2px; background: #d0d4de; }
.push { margin-left: auto; }
.status { display: flex; align-items: center; height: 38px; margin: 16px 0 0 -260px; }
.chips { flex: 1; display: flex; justify-content: center; gap: 12px; }
.chip { display: flex; justify-content: space-between; align-items: center; height: 38px; padding: 0 18px; background: #45484a; border-radius: 4px; font-size: 19px; }
.chip dd { font-weight: 700; }
.w1 { width: 328px; }
.w2 { width: 302px; }
.w3 { width: 394px; }
.warn { color: #f09a4c; }
.cog { width: 38px; height: 38px; border: 2px solid #707374; border-radius: 4px; background: #1b1d20; display: grid; place-items: center; }
.cog svg { width: 26px; height: 26px; }
.infoline { height: 78px; background: #17191b; display: flex; align-items: center; justify-content: center; padding: 6px 0 0 12px; color: #b9bbbc; font-weight: 600; font-size: 21px; }

/* workspace */
.workspace { flex: 1; min-height: 0; display: flex; gap: 8px; padding: 10px 8px 0; }
.edge { height: 10px; border-bottom: 2px solid #2b2528; }

/* inspector */
.inspector { width: 346px; display: flex; flex-direction: column; }
.tabs { display: flex; height: 48px; }
.tabs button { color: #d0d2d3; font-weight: 600; font-size: 23px; }
.tabs.top button { padding: 0 21px 4px 24px; }
.tabs .active { background: #25292d; border: 4px solid #5f6163; color: #fff; position: relative; z-index: 1; }
.tabs.top .active { width: 156px; padding: 0 0 4px; border-bottom: 0; border-radius: 10px 6px 0 0; }
.tabs.bottom { height: 44px; }
.tabs.bottom button { width: 146px; font-size: 22px; }
.tabs.bottom .active { width: 141px; border-top: 0; border-radius: 0 0 6px 10px; }
.burger { width: 16px; height: 12px; border: solid #c9cbcc; border-width: 4px 0; margin: 18px 0 0 20px; }
.pane { flex: 1; margin: -4px 0; background: #25292d; border: 4px solid #5f6163; border-radius: 0 12px 12px 0; padding: 16px 14px 0; }
.trackname { display: flex; align-items: center; height: 46px; background: #929496; border: 2px solid #a2a4a6; border-radius: 4px; color: #111; font-weight: 600; font-size: 21px; overflow: hidden; }
.trackname button { width: 46px; height: 46px; background: #6d6f71; color: #fff; display: grid; place-items: center; }
.trackname .tri { width: 18px; height: 18px; }
.trackname .nm { flex: 1; padding-left: 10px; }
.trackname .play { width: 9px; height: 14px; margin-right: 6px; }
.trackname svg { width: 28px; height: 28px; }

.trackctl { position: relative; display: flex; gap: 6px; width: 298px; height: 98px; margin: 16px 4px 0 6px; padding: 4px; color: #111; }
.bulge { position: absolute; inset: 0; width: 298px; height: 98px; }
.ctl-left, .ctl-right { position: relative; display: flex; flex-direction: column; gap: 2px; }
.pair { display: flex; height: 34px; border: 2px solid #5d7184; border-radius: 5px; background: linear-gradient(#c9daeb, #a9c0d8); overflow: hidden; }
.pair button { width: 43px; height: 30px; font: 700 20px/28px "DejaVu Sans", sans-serif; display: grid; place-items: center; }
.pair button + button { border-left: 2px solid #5d7184; }
.rw { width: 192px; }
.pair.rw button, .pair.nl button { width: 47px; border: 0; }
.pair svg { width: 22px; height: 22px; }
.pair.nl button:last-child svg { width: 30px; height: 15px; }
.nl { width: 144px; }
.orange { background: #e2b267; }
.rec { display: flex; gap: 2px; }
.record { width: 50px; height: 50px; border-radius: 50%; background: radial-gradient(circle, #000 0 11px, #de4c50 12px); border: 2px solid #6d3d48; }
.mon { width: 36px; height: 36px; border-radius: 50%; border: 2px solid #5d7184; background: #cbd8e6; display: grid; place-items: center; }
.mon svg { width: 18px; height: 18px; }

.params { display: flex; justify-content: flex-end; gap: 10px; margin: 4px 6px 0 0; }
.picons { width: 44px; display: flex; flex-direction: column; gap: 26px; padding-top: 14px; color: #86a0bd; align-items: center; }
.picons svg { width: 30px; height: 16px; }
.picons .wide { width: 44px; height: 20px; }
.pvals { width: 202px; height: 134px; background: #000; border: 2px solid #34383c; border-radius: 3px; font-size: 20px; font-weight: 600; }
.pvals label { display: block; position: relative; line-height: 42px; height: 43px; text-align: right; }
.pvals .mid { text-align: center; }
.pvals input { position: absolute; left: 0; bottom: -3px; width: 198px; height: 10px; background: linear-gradient(#1e2c38, #1e2c38) center/100% 2px no-repeat; }
.pvals input.fill { background: linear-gradient(#46a9bd, #46a9bd) left center/98px 3px no-repeat, linear-gradient(#1e2c38, #1e2c38) center/100% 2px no-repeat; }
.pvals input::-webkit-slider-thumb { appearance: none; width: 10px; height: 10px; background: #6bd0ee; border: solid #fff; border-width: 3px 0; }

.box { width: 298px; margin: 18px 0 0 6px; background: #000; border: 2px solid #34383c; border-radius: 3px; font-size: 19px; font-weight: 600; }
.line { height: 34px; display: flex; align-items: center; gap: 10px; padding: 0 3px 0 5px; white-space: nowrap; }
.line + .line { border-top: 2px solid #34383c; height: 36px; }
.line svg { width: 20px; height: 22px; color: #5c7580; }
.line span { flex: 1; padding-left: 3px; }
.dim, .retro { color: #55687c; }
.channel { display: flex; align-items: center; justify-content: space-between; width: 176px; height: 35px; margin-left: 128px; padding: 0 2px 0 28px; background: #000; clip-path: polygon(0 0, 100% 0, 100% 100%, 24px 100%); font-size: 19px; font-weight: 600; }
.channel svg { width: 20px; height: 22px; color: #77898f; }
.channel span { margin-left: 18px; }
.channel button { width: 52px; height: 33px; background: #11171a; display: flex; align-items: center; justify-content: space-around; }
.channel button svg { color: #9fb0b6; }
.drum { margin-top: 8px; }
.retro { width: 298px; height: 42px; margin: 9px 0 0 6px; padding: 0 2px 0 7px; background: #000; display: flex; align-items: center; justify-content: space-between; font-size: 19px; font-weight: 600; white-space: nowrap; }
.retro .tri { width: 10px; height: 6px; }
.transformer { display: flex; align-items: center; justify-content: space-between; margin: 7px 6px 0 14px; height: 36px; font-size: 18px; font-weight: 500; white-space: nowrap; }
.transformer .pick { width: 96px; height: 36px; border: 2px solid #707374; border-radius: 3px; }
.transformer .pick::after { width: 12px; height: 12px; right: 10px; }
.transformer select { font-size: 18px; line-height: 32px; padding: 0 8px; }

.sections { display: flex; flex-direction: column; gap: 20px; margin-top: 29px; }
.sec { display: flex; height: 46px; background: #5b5d60; border: 2px solid #7b7d7f; border-radius: 5px; overflow: hidden; }
.sec > button { flex: 1; display: flex; align-items: center; gap: 11px; padding-left: 12px; font-size: 22px; line-height: 30px; white-space: nowrap; }
.sec > span { width: 47px; border-left: 2px solid #7b7d7f; display: grid; place-items: center; }
.sec svg { width: 30px; height: 30px; }
.inst { margin-bottom: -4px; }
.inst > button { flex: none; width: 46px; }
.inst > b { flex: 1; display: flex; align-items: center; background: #929496; color: #111; border: solid #111; border-width: 0 2px; padding: 0 5px 0 9px; font-size: 20px; font-weight: 600; }
.inst > b svg { margin-left: auto; width: 22px; height: 22px; color: #fff; }
.inst > b .play { width: 8px; height: 14px; margin-left: 12px; }
.sec.inst > span { border: 0; }
.sec .blue { background: linear-gradient(#aacaff, #78aefa); color: #111; }
.setup { width: 50px; height: 38px; border: 2px solid #707374; background: #1b1d20; display: grid; place-items: center; }
.setup svg { width: 26px; height: 26px; }

/* project window */
.project { flex: 1; min-width: 0; border: 4px solid #f4f5f6; border-radius: 10px; background: #25282b; display: flex; padding-right: 8px; }
.tracklist { width: 730px; padding: 0 2px 0 8px; display: flex; flex-direction: column; }
.tl-head { height: 56px; display: flex; align-items: center; padding: 0 4px 2px 0; }
.mini, .count { display: flex; height: 38px; border: 2px solid #77797b; border-radius: 3px; background: #5b5d60; }
.mini button, .count button { width: 48px; display: grid; place-items: center; }
.mini svg, .count svg { width: 28px; height: 28px; }
.count { margin-left: auto; border: 0; background: #45484a; font-size: 19px; }
.count span { width: 126px; padding-left: 9px; line-height: 38px; }
.count button { width: 50px; background: #1b1d20; border: 2px solid #77797b; border-left-width: 1px; }
.find { margin-left: 20px; }
.tl-view { flex: 1; min-height: 0; overflow: hidden; border-top: 2px solid #707374; }
.tracks { margin-top: -12px; }
.track { display: flex; align-items: center; height: 28px; border-bottom: 2px solid #707374; border-right: 22px solid #000; position: relative; }
.group-row { height: 40px; }
.tag { width: 80px; height: 100%; flex: none; margin: 0 0 0 2px; background: #919395; display: flex; align-items: center; justify-content: space-between; padding: 0 8px 0 5px; color: #fff; }
.ico { width: 32px; height: 24px; }
.ico.audio { width: 36px; margin-left: -3px; }
.ico.folder, .ico.open { width: 32px; height: 32px; }
.num { color: #3e4042; font-size: 18px; line-height: 26px; }
.ms { width: 42px; height: 26px; flex: none; margin-left: 14px; background: linear-gradient(90deg, #4b4d4f, #57595b); color: #000; font: 700 20px/26px "DejaVu Sans", sans-serif; }
.ms + .ms { margin-left: 2px; }
.name { font-weight: 700; font-size: 24px; line-height: 28px; margin-left: 10px; padding-top: 2px; white-space: nowrap; }
.group-row .name { font-weight: 600; font-size: 21px; margin-left: 20px; }
.open .tag { width: 102px; }
.name.editing { display: flex; align-items: center; justify-content: space-between; width: 344px; height: 26px; margin-left: 8px; padding-left: 2px; background: linear-gradient(#36383a, #2a2c2e); border-right: 2px solid #4b4d4f; }
.editing::after { content: ""; width: 14px; height: 12px; background: #111; clip-path: polygon(0 0, 100% 0, 50% 100%); }
.gain { position: absolute; left: 542px; width: 94px; line-height: 26px; background: #484b4d; color: #000; text-align: center; font-size: 19px; font-weight: 600; }
.tl-foot { height: 38px; display: flex; align-items: center; gap: 20px; padding: 0 9px 10px 16px; color: #85888a; }
.tl-foot span { flex: 1; color: #d5d7d8; }
.tl-foot .tri { width: 18px; height: 12px; }
.tl-foot svg { width: 24px; height: 24px; }
.splitter { width: 4px; margin: 8px 2px 8px 0; background: #6a6c6e; display: flex; flex-direction: column; gap: 4px; padding-top: 904px; }
.splitter i { height: 8px; background: #fff; }

/* timeline */
.timeline { flex: 1; min-width: 0; display: flex; flex-direction: column; padding: 8px 0; }
.ruler { position: relative; height: 50px; background: #1b1d1f; overflow: hidden; }
.ruler i, .grid i { position: absolute; top: 0; bottom: 0; }
.ruler .range { background: #745ee2; }
.ruler .tick { width: 2px; bottom: 2px; background: #f4f4fa; }
.ruler .num { top: 17px; margin-left: 11px; color: #fff; font-size: 24px; line-height: 32px; font-weight: 600; }
.ruler .loc { width: 20px; height: 20px; background: #fff; clip-path: polygon(0 0, 100% 0, 0 100%); }
.ruler .loc.right { margin-left: -20px; clip-path: polygon(0 0, 100% 0, 100% 100%); }
.lanes { position: relative; flex: 1; min-height: 0; overflow: hidden; background: #25282c; }
.grid { position: absolute; inset: 0; }
.grid .range { background: #282f36; }
.grid .tick { width: 2px; background: #7b7e81; }
.grid .mark { width: 2px; background: #676c70; }
.stack { position: relative; margin-top: -12px; }
.lane { position: relative; height: 28px; border-bottom: 2px solid rgba(120, 132, 142, .28); }
.lane.tall { height: 40px; }
.clip { position: absolute; top: 2px; height: 22px; background: #929395; border: 2px solid #5c5e60; box-shadow: inset 0 0 0 2px #dcdee0; }
.clip b { position: absolute; top: 2px; bottom: 2px; width: 2px; background: #6b6c6e; }
.hit { background: #eceef2; box-shadow: none; }
.thin { background: #5c5e60; box-shadow: none; }
.light { background: #8b9098; border-color: #8b9098; }
.rule-line { position: absolute; left: 0; right: 0; top: 812px; height: 2px; background: #c4c9ce; }
.cursor { position: absolute; top: 0; bottom: 0; left: 12px; width: 8px; border: solid #d9dadb; border-width: 0 2px; background: #000; }
.hbar { display: flex; align-items: center; height: 24px; }
.hscroll { flex: 1; height: 24px; display: flex; background: #464849; border-radius: 3px; }
.hscroll button { width: 37px; display: grid; place-items: center; }
.hscroll svg { width: 12px; height: 16px; }
.hscroll svg path, .vscroll svg path { fill: none; stroke: #fff; stroke-width: 3; }
.hscroll .rail { flex: 1; padding: 5px 0; }
.hscroll .thumb { width: 36%; height: 14px; background: #f2f3f4; }
.hzoom { width: 217px; display: flex; align-items: center; gap: 12px; padding: 6px 25px 0 14px; color: #b5b7b8; }
.hzoom .tri { width: 16px; height: 8px; }
.hzoom b, .side b { font-size: 22px; line-height: 22px; font-weight: 400; }
.hzoom input { flex: 1; min-width: 0; height: 14px; background: linear-gradient(#b5b7b8, #b5b7b8) center/100% 2px no-repeat; }
.hzoom input::-webkit-slider-thumb, .v::-webkit-slider-thumb { appearance: none; width: 12px; height: 12px; border-radius: 50%; background: #b5b7b8; }

/* vertical scroll and zoom */
.side { width: 24px; padding: 8px 0 36px; display: flex; flex-direction: column; align-items: center; color: #b5b7b8; }
.menu { width: 24px; height: 44px; flex: none; border: 2px solid #77797b; border-radius: 4px; background: #5b5d60; color: #fff; display: grid; place-items: center; }
.menu .tri { width: 16px; height: 14px; }
.slash { width: 24px; height: 24px; margin: 10px 0 14px; }
.v { writing-mode: vertical-lr; width: 12px; background: linear-gradient(#b5b7b8, #b5b7b8) center/2px 100% no-repeat; }
.wave { height: 98px; }
.tall.v { height: 112px; }
.vscroll { flex: 1; width: 24px; margin: 12px 0; background: #464849; border-radius: 4px; display: flex; flex-direction: column; }
.vscroll button { height: 26px; display: grid; place-items: center; }
.vscroll svg { width: 16px; height: 12px; }
.vscroll .rail { flex: 1; position: relative; }
.vscroll .thumb { position: absolute; left: 5px; right: 5px; top: 32%; height: 56%; background: #f2f3f4; }
.side > .tri { width: 16px; height: 8px; margin-bottom: 8px; }
```
